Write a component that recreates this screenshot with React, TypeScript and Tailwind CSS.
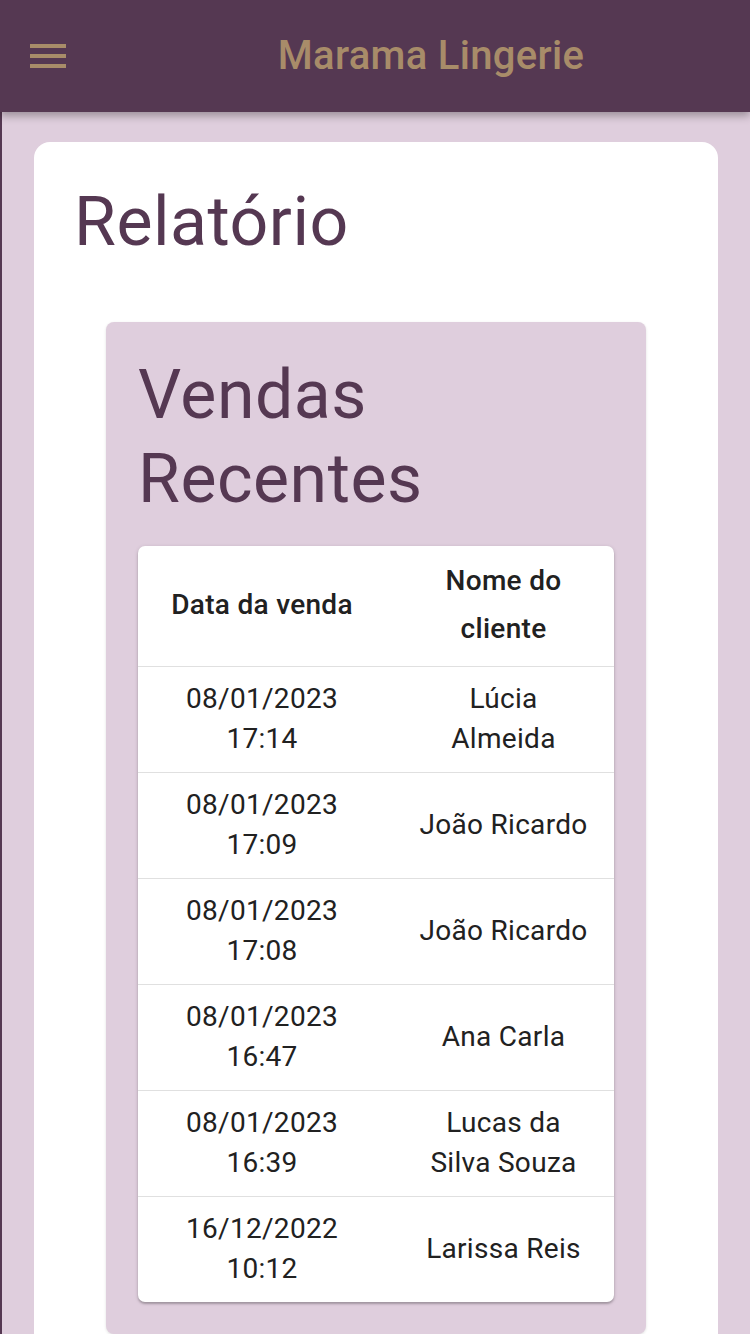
import React from "react";

const VENDAS = [
  { data: "08/01/2023 17:14", cliente: "Lúcia Almeida" },
  { data: "08/01/2023 17:09", cliente: "João Ricardo" },
  { data: "08/01/2023 17:08", cliente: "João Ricardo" },
  { data: "08/01/2023 16:47", cliente: "Ana Carla" },
  { data: "08/01/2023 16:39", cliente: "Lucas da Silva Souza" },
  { data: "16/12/2022 10:12", cliente: "Larissa Reis" },
];

function MenuIcon() {
  return (
    <svg viewBox="0 0 24 24" className="h-12 w-12" fill="#a88c69">
      <path d="M3 18h18v-2H3v2zm0-5h18v-2H3v2zm0-7v2h18V6H3z" />
    </svg>
  );
}

export default function App() {
  return (
    <div className="min-h-[1334px] bg-[#dfcedd] font-['Roboto',sans-serif]">
      {/* App bar */}
      <header className="relative z-10 flex h-[112px] items-center bg-[#553852] shadow-[0_4px_8px_rgba(0,0,0,0.3)]">
        <div className="flex w-[112px] pl-6">
          <MenuIcon />
        </div>
        <h1 className="flex-1 text-center text-[40px] font-medium leading-[64px] tracking-[0.0075em] text-[#a88c69]">
          Marama Lingerie
        </h1>
      </header>

      <main className="min-h-[1222px] border-l-2 border-[#553852] px-8 pt-[30px]">
        <section className="rounded-2xl bg-white px-10 pt-[38px] pb-10">
          <h2 className="text-[68px] leading-[84px] tracking-[0.00735em] text-[#553852]">
            Relatório
          </h2>

          <div className="mx-8 mt-[58px] rounded-lg bg-[#dfcedd] px-8 pt-[31px] pb-8 shadow-[0_1px_3px_rgba(0,0,0,0.12)]">
            <h3 className="mb-[25px] text-[68px] leading-[84px] tracking-[0.00735em] text-[#553852]">
              Vendas Recentes
            </h3>

            <div className="overflow-hidden rounded-[7px] bg-white shadow-[0_2px_2px_rgba(0,0,0,0.2),0_1px_4px_rgba(0,0,0,0.14)]">
              <table className="w-full table-fixed border-collapse text-[28px] tracking-[0.01071em] text-[#212121]">
                <colgroup>
                  <col className="w-[248px]" />
                  <col />
                </colgroup>
                <thead>
                  <tr className="border-b border-[#e0e0e0]">
                    <th className="px-8 pt-[11px] pb-[13px] text-center font-medium leading-[48px]">
                      Data da venda
                    </th>
                    <th className="pl-8 pr-[25px] pt-[11px] pb-[13px] text-center font-medium leading-[48px]">
                      Nome do cliente
                    </th>
                  </tr>
                </thead>
                <tbody>
                  {VENDAS.map((v, i) => (
                    <tr
                      key={i}
                      className={i < VENDAS.length - 1 ? "border-b border-[#e0e0e0]" : ""}
                    >
                      <td className="px-8 pt-3 pb-[13px] text-center leading-[40px]">{v.data}</td>
                      <td className="pl-8 pr-[25px] pt-3 pb-[13px] text-center leading-[40px]">
                        {v.cliente}
                      </td>
                    </tr>
                  ))}
                </tbody>
              </table>
            </div>
          </div>
        </section>
      </main>
    </div>
  );
}
